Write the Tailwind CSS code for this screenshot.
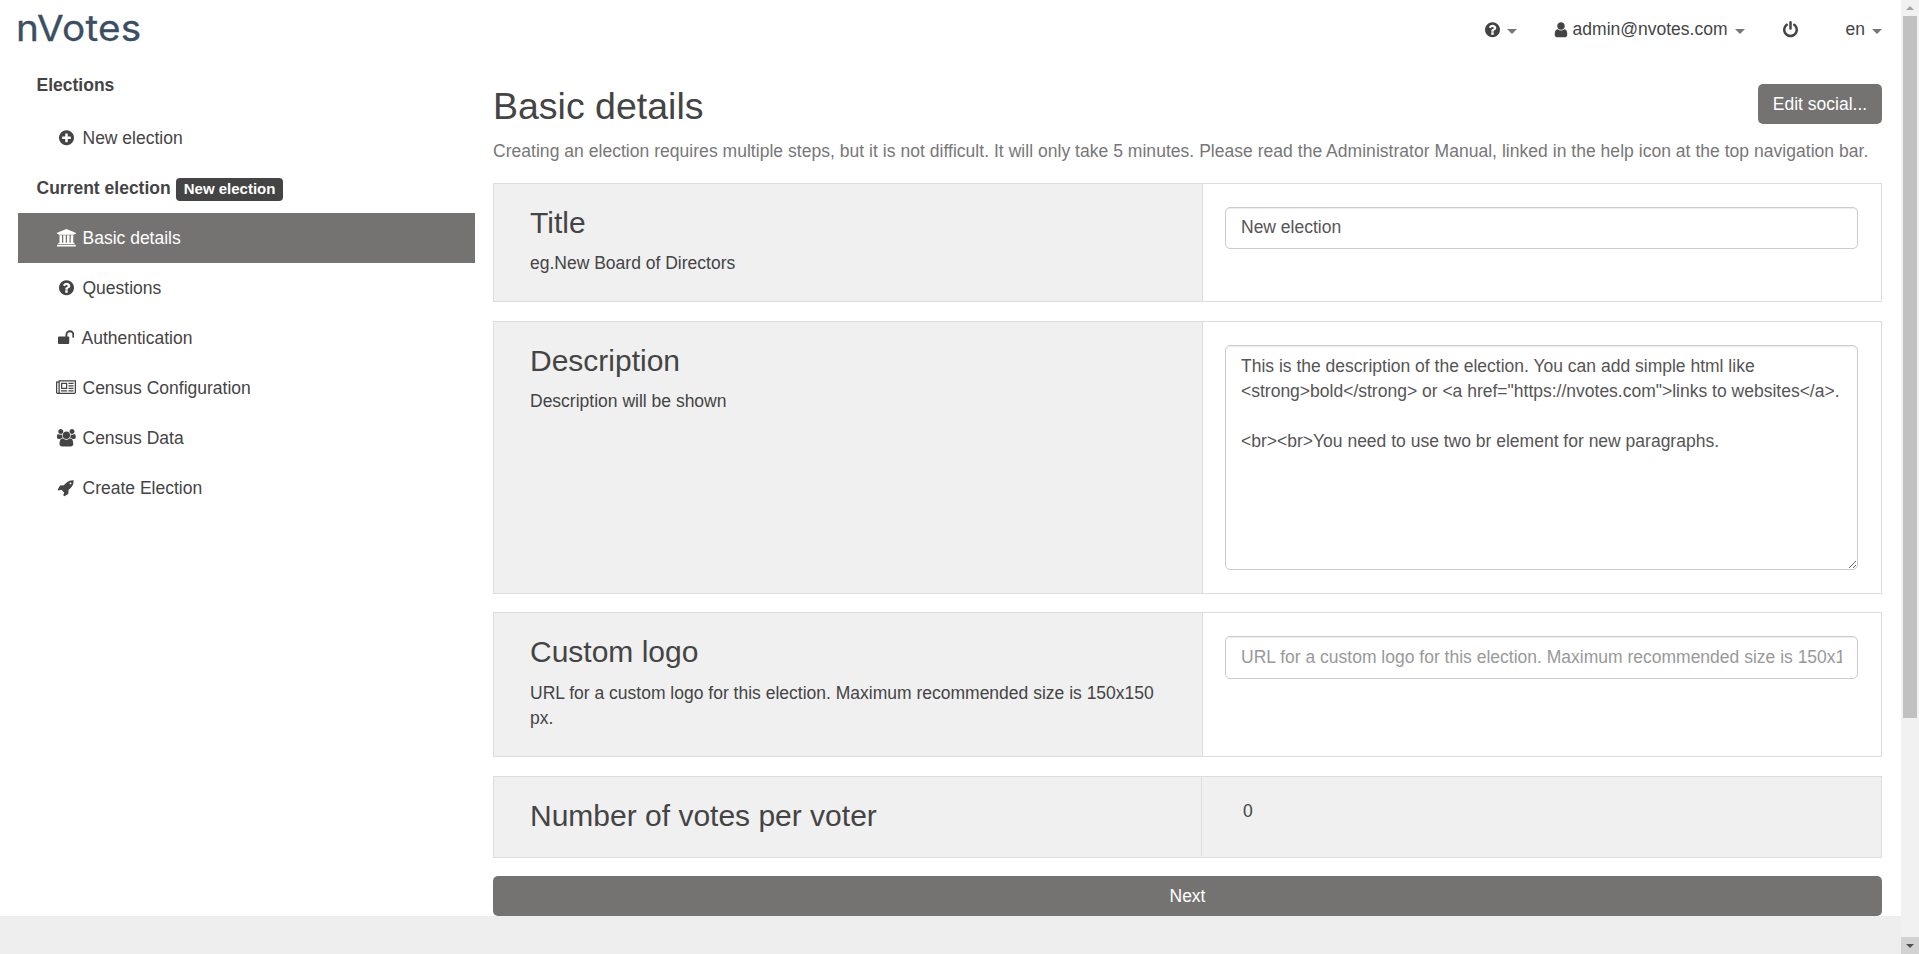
<!DOCTYPE html>
<html lang="en">
<head>
<meta charset="utf-8">
<title>nVotes</title>
<script src="https://cdn.jsdelivr.net/npm/@tailwindcss/browser@4"></script>
</head>
<body class="flex h-[954px] overflow-hidden bg-[#eeeeee] font-['Liberation_Sans',Arial,sans-serif] text-[17.5px] leading-[25px] text-[#444444]">
<svg class="hidden">
  <symbol id="question" viewBox="128 0 1536 1792"><path d="M1024 1376v-192q0-14-9-23t-23-9h-192q-14 0-23 9t-9 23v192q0 14 9 23t23 9h192q14 0 23-9t9-23zm256-672q0-88-55.5-163t-138.5-116-170-41q-243 0-371 213-15 24 8 42l132 100q7 6 19 6 16 0 25-12 53-68 86-92 34-24 86-24 48 0 85.5 26t37.5 59q0 38-20 61t-68 45q-63 28-115.5 86.5t-52.5 125.5v36q0 14 9 23t23 9h192q14 0 23-9t9-23q0-19 21.5-49.5t54.5-49.5q32-18 49-28.5t46-35 44.5-48 28-60.5 12.5-81zm384 192q0 209-103 385.5t-279.5 279.5-385.5 103-385.5-103-279.5-279.5-103-385.5 103-385.5 279.5-279.5 385.5-103 385.5 103 279.5 279.5 103 385.5z"/></symbol>
</svg>

<div class="flex h-[916px] w-[1901px] flex-col bg-white">
  <header class="flex h-[60px] shrink-0 items-start justify-between pl-[18px] pr-[19px]">
    <div class="-ml-[2px] mt-[6px] origin-left scale-x-[1.075] whitespace-nowrap font-[Inter,sans-serif] text-[36px] leading-[44px] tracking-[0.2px] text-[#3b4f63] [-webkit-text-stroke:0.3px_#3b4f63]">nVotes</div>
    <nav class="mt-[17px] flex items-center">
      <div class="flex items-center">
        <svg class="h-[17.5px] w-[15px] fill-current"><use href="#question"/></svg>
        <span class="ml-[7px] mt-[3px] border-x-5 border-t-5 border-x-transparent border-t-[#777777]"></span>
      </div>
      <div class="ml-[37px] flex items-center">
        <svg class="h-[17.5px] w-[14px] fill-current" viewBox="192 0 1408 1792"><path d="M1536 1399q0 109-62.5 187t-150.5 78h-854q-88 0-150.5-78t-62.5-187q0-85 8.5-160.5t31.5-152 58.5-131 94-89 134.5-34.5q131 128 313 128t313-128q76 0 134.5 34.5t94 89 58.5 131 31.5 152 8.5 160.5zm-256-887q0 159-112.5 271.5t-271.5 112.5-271.5-112.5-112.5-271.5 112.5-271.5 271.5-112.5 271.5 112.5 112.5 271.5z"/></svg>
        <span class="ml-[5px]">admin@nvotes.com</span>
        <span class="ml-[7px] mt-[3px] border-x-5 border-t-5 border-x-transparent border-t-[#777777]"></span>
      </div>
      <svg class="ml-[38px] h-[17.5px] w-[15px] fill-current" viewBox="128 0 1536 1792"><path d="M1664 896q0 156-61 298t-164 245-245 164-298 61-298-61-245-164-164-245-61-298q0-182 80.5-343t226.5-270q43-32 95.5-25t83.5 50q32 42 24.5 94.5t-49.5 84.5q-98 74-151.5 181t-53.5 228q0 104 40.5 198.5t109.5 163.5 163.5 109.5 198.5 40.5 198.5-40.5 163.5-109.5 109.5-163.5 40.5-198.5q0-121-53.5-228t-151.5-181q-42-32-49.5-84.5t24.5-94.5q31-43 84-50t95 25q146 109 226.5 270t80.5 343zm-640-768v640q0 52-38 90t-90 38-90-38-38-90v-640q0-52 38-90t90-38 90 38 38 90z"/></svg>
      <div class="ml-[48px] flex items-center">
        <span>en</span>
        <span class="ml-[7px] mt-[3px] border-x-5 border-t-5 border-x-transparent border-t-[#777777]"></span>
      </div>
    </nav>
  </header>

  <div class="flex">
    <aside class="ml-[18px] mt-[13px] w-[457px] shrink-0">
      <div class="h-10 pl-[18.5px] font-bold">Elections</div>
      <a class="flex h-[50px] items-center pl-[37px]"><span class="mr-[5px] flex w-[22.5px] justify-center"><svg class="h-[17.5px] w-[15px] fill-current" viewBox="128 0 1536 1792"><path d="M1344 960v-128q0-26-19-45t-45-19h-256v-256q0-26-19-45t-45-19h-128q-26 0-45 19t-19 45v256h-256q-26 0-45 19t-19 45v128q0 26 19 45t45 19h256v256q0 26 19 45t45 19h128q26 0 45-19t19-45v-256h256q26 0 45-19t19-45zm320-64q0 209-103 385.5t-279.5 279.5-385.5 103-385.5-103-279.5-279.5-103-385.5 103-385.5 279.5-279.5 385.5-103 385.5 103 279.5 279.5 103 385.5z"/></svg></span>New election</a>
      <div class="flex h-[50px] items-center pl-[18.5px] font-bold">Current election<span class="ml-[5px] mt-[3px] h-[23px] rounded-[4px] bg-[#444444] px-2 text-[15px] leading-[22px] text-white">New election</span></div>
      <a class="flex h-[50px] items-center bg-[#757371] pl-[37px] text-white"><span class="mr-[5px] flex w-[22.5px] justify-center"><svg class="h-[17.5px] w-[18.75px] fill-current" viewBox="0 0 1920 1792"><path d="M960 0l960 384v128h-128q0 26-20.5 45t-48.5 19h-1526q-28 0-48.5-19t-20.5-45h-128v-128zm-704 640h256v768h128v-768h256v768h128v-768h256v768h128v-768h256v768h59q28 0 48.5 19t20.5 45v64h-1664v-64q0-26 20.5-45t48.5-19h59v-768zm1595 960q28 0 48.5 19t20.5 45v128h-1920v-128q0-26 20.5-45t48.5-19h1782z"/></svg></span>Basic details</a>
      <a class="flex h-[50px] items-center pl-[37px]"><span class="mr-[5px] flex w-[22.5px] justify-center"><svg class="h-[17.5px] w-[15px] fill-current"><use href="#question"/></svg></span>Questions</a>
      <a class="flex h-[50px] items-center pl-[37px]"><span class="mr-[4px] flex w-[22.5px] justify-center"><svg class="h-[17.5px] w-[16.25px] fill-current" viewBox="0 0 1664 1792"><path d="M1664 576v256q0 26-19 45t-45 19h-64q-26 0-45-19t-19-45v-256q0-106-75-181t-181-75-181 75-75 181v192h96q40 0 68 28t28 68v576q0 40-28 68t-68 28h-960q-40 0-68-28t-28-68v-576q0-40 28-68t68-28h672v-192q0-185 131.5-316.5t316.5-131.5 316.5 131.5 131.5 316.5z"/></svg></span>Authentication</a>
      <a class="flex h-[50px] items-center pl-[37px]"><span class="mr-[5px] flex w-[22.5px] justify-center"><svg class="h-[17.5px] w-5 fill-current" viewBox="0 0 2048 1792"><path d="M1024 512h-384v384h384v-384zm128 640v128h-640v-128h640zm0-768v640h-640v-640h640zm640 768v128h-512v-128h512zm0-256v128h-512v-128h512zm0-256v128h-512v-128h512zm0-256v128h-512v-128h512zm-1536 960v-960h-128v960q0 26 19 45t45 19 45-19 19-45zm1664 0v-1088h-1536v1088q0 33-11 64h1483q26 0 45-19t19-45zm128-1216v1216q0 80-56 136t-136 56h-1664q-80 0-136-56t-56-136v-1088h256v-128h1792z"/></svg></span>Census Configuration</a>
      <a class="flex h-[50px] items-center pl-[37px]"><span class="mr-[5px] flex w-[22.5px] justify-center"><svg class="h-[17.5px] w-[18.75px] fill-current" viewBox="0 0 1920 1792"><path d="M593 896q-162 5-265 128h-134q-82 0-138-40.5t-56-118.5q0-353 124-353 6 0 43.5 21t97.5 42.5 119 21.5q67 0 133-23-5 37-5 66 0 139 81 256zm1071 637q0 120-73 189.5t-194 69.5h-874q-121 0-194-69.5t-73-189.5q0-53 3.5-103.5t14-109 26.5-108.5 43-97.5 62-81 85.5-53.5 111.5-20q10 0 43 21.5t73 48 107 48 135 21.5 135-21.5 107-48 73-48 43-21.5q61 0 111.5 20t85.5 53.5 62 81 43 97.5 26.5 108.5 14 109 3.5 103.5zm-1024-1277q0 106-75 181t-181 75-181-75-75-181 75-181 181-75 181 75 75 181zm704 384q0 159-112.5 271.5t-271.5 112.5-271.5-112.5-112.5-271.5 112.5-271.5 271.5-112.5 271.5 112.5 112.5 271.5zm576 225q0 78-56 118.5t-138 40.5h-134q-103-123-265-128 81-117 81-256 0-29-5-66 66 23 133 23 59 0 119-21.5t97.5-42.5 43.5-21q124 0 124 353zm-128-609q0 106-75 181t-181 75-181-75-75-181 75-181 181-75 181 75 75 181z"/></svg></span>Census Data</a>
      <a class="flex h-[50px] items-center pl-[37px]"><span class="mr-[5px] flex w-[22.5px] justify-center"><svg class="h-[17.5px] w-[16.25px] fill-current" viewBox="64 0 1664 1792"><path d="M1440 448q0-40-28-68t-68-28-68 28-28 68 28 68 68 28 68-28 28-68zm224-288q0 249-75.5 430.5t-253.5 360.5q-81 80-195 176l-20 379q-2 16-16 26l-384 224q-7 4-16 4-12 0-23-9l-64-64q-13-14-8-32l85-276-281-281-276 85q-3 1-9 1-14 0-23-9l-64-64q-17-19-5-39l224-384q10-14 26-16l379-20q96-114 176-195 188-187 358-258t431-71q14 0 24 9.5t10 22.5z"/></svg></span>Create Election</a>
    </aside>

    <main class="ml-[18px] mt-6 w-[1389px]">
      <div class="flex h-[55px] items-start justify-between">
        <h1 class="mt-[1px] text-[37.5px] leading-[42px]">Basic details</h1>
        <button class="h-10 w-[124px] rounded-[5px] bg-[#757371] text-white">Edit social...</button>
      </div>
      <p class="h-[44px] whitespace-nowrap tracking-[0.032px] text-[#777777]">Creating an election requires multiple steps, but it is not difficult. It will only take 5 minutes. Please read the Administrator Manual, linked in the help icon at the top navigation bar.</p>

      <section class="flex h-[119px] border border-[#dddddd]">
        <div class="w-[709px] border-r border-[#dddddd] bg-[#f0f0f0] pl-9 pr-9 pt-[22px]">
          <h3 class="mb-3 text-[30px] leading-[33px]">Title</h3>
          <p>eg.New Board of Directors</p>
        </div>
        <div class="flex-1 pl-[22px] pt-[23px]">
          <input type="text" value="New election" class="block h-[42px] w-[633px] rounded-[5px] border border-[#cccccc] px-[15px] pb-[8px] pt-[7px] text-[#555555] shadow-[inset_0_1px_1px_rgba(0,0,0,0.075)]">
        </div>
      </section>

      <section class="mt-[19px] flex h-[273px] border border-[#dddddd]">
        <div class="w-[709px] border-r border-[#dddddd] bg-[#f0f0f0] pl-9 pr-9 pt-[22px]">
          <h3 class="mb-3 text-[30px] leading-[33px]">Description</h3>
          <p>Description will be shown</p>
        </div>
        <div class="flex-1 pl-[22px] pt-[23px]">
          <textarea class="block h-[225px] w-[633px] resize rounded-[5px] border border-[#cccccc] px-[15px] py-2 text-[#555555] shadow-[inset_0_1px_1px_rgba(0,0,0,0.075)]">This is the description of the election. You can add simple html like &lt;strong&gt;bold&lt;/strong&gt; or &lt;a href="https://nvotes.com"&gt;links to websites&lt;/a&gt;.

&lt;br&gt;&lt;br&gt;You need to use two br element for new paragraphs.</textarea>
        </div>
      </section>

      <section class="mt-[18px] flex h-[145px] border border-[#dddddd]">
        <div class="w-[709px] border-r border-[#dddddd] bg-[#f0f0f0] pl-9 pr-9 pt-[22px]">
          <h3 class="mb-[13px] text-[30px] leading-[33px]">Custom logo</h3>
          <p>URL for a custom logo for this election. Maximum recommended size is 150x150 px.</p>
        </div>
        <div class="flex-1 pl-[22px] pt-[23px]">
          <input type="text" placeholder="URL for a custom logo for this election. Maximum recommended size is 150x150 px." class="block h-[43px] w-[633px] rounded-[5px] border border-[#cccccc] px-[15px] pb-[8px] pt-[8px] text-[#555555] shadow-[inset_0_1px_1px_rgba(0,0,0,0.075)] placeholder:text-[#999999]">
        </div>
      </section>

      <section class="mt-[19px] flex h-[82px] border border-[#dddddd] bg-[#f0f0f0]">
        <div class="h-[79px] w-[708px] border-r border-[#dddddd] pl-9 pt-[22px]">
          <h3 class="text-[30px] leading-[33px]">Number of votes per voter</h3>
        </div>
        <div class="pl-[41px] pt-[22px]">0</div>
      </section>

      <button class="mt-[18px] block h-10 w-full rounded-[5px] bg-[#757371] text-white">Next</button>
    </main>
  </div>
</div>

<!-- Page scrollbar -->
<div class="flex h-[954px] w-[18px] flex-col items-center justify-between bg-[#f1f1f1]">
  <div class="flex flex-col items-center">
    <div class="flex h-4 items-center"><span class="border-x-4 border-b-4 border-x-transparent border-b-[#a3a3a3]"></span></div>
    <div class="h-[702px] w-[14px] bg-[#c1c1c1]"></div>
  </div>
  <div class="flex h-[17px] w-full items-center justify-center bg-[#d2d2d2]"><span class="border-x-4 border-t-4 border-x-transparent border-t-[#505050]"></span></div>
</div>
</body>
</html>
